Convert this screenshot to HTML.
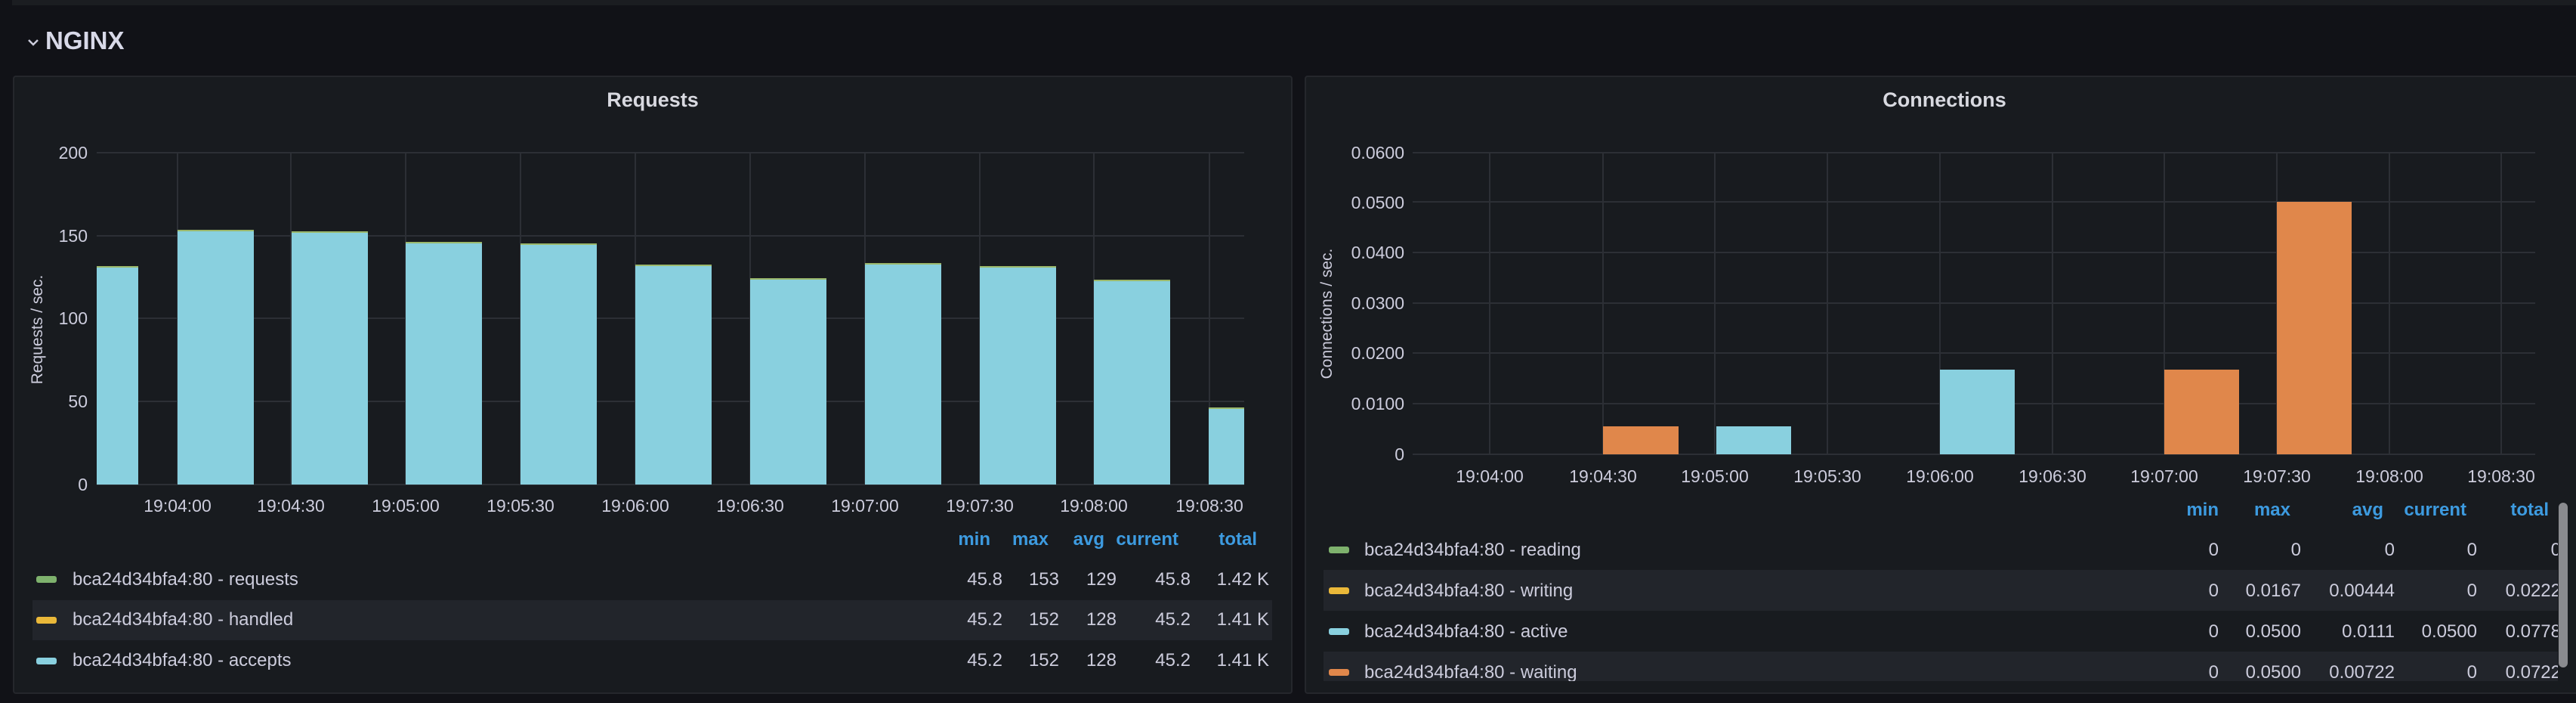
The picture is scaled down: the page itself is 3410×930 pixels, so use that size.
<!DOCTYPE html>
<html><head><meta charset="utf-8"><style>
*{margin:0;padding:0;box-sizing:border-box}
body{width:3410px;height:930px;background:#111217;overflow:hidden;font-family:"Liberation Sans",sans-serif;color:#ccccdc;position:relative}
.a{position:absolute}
.panel{position:absolute;background:#181b1f;border:2px solid #25272c;border-radius:4px;overflow:hidden}
.title{position:absolute;top:18px;width:100%;text-align:center;font-size:27px;font-weight:bold;color:#d8d9e0}
.hdr{position:absolute;font-size:24px;color:#3d9be0;font-weight:bold}
.row{position:absolute;height:53px;font-size:24px}
.hl{background:#22252b}
.mk{position:absolute;width:27px;height:9px;border-radius:3px}
.t{position:absolute;white-space:nowrap}
.r{position:absolute;text-align:right;white-space:nowrap}
svg text{font-family:"Liberation Sans",sans-serif;fill:#ccccdc}
</style></head><body>
<div class="a" style="left:16px;top:0;width:3394px;height:7px;background:#1b1d21"></div>
<svg class="a" style="left:36px;top:49px" width="18" height="14"><path d="M2 4 L8 10 L14 4" stroke="#ccccdc" stroke-width="2.5" fill="none"/></svg>
<div class="t" style="left:60px;top:35px;font-size:33px;font-weight:bold;color:#d8d9e8">NGINX</div>

<!-- Left panel -->
<div class="panel" style="left:17px;top:100px;width:1694px;height:818px"></div>
<div class="t" style="left:17px;top:117px;width:1694px;text-align:center;font-size:27px;font-weight:bold;color:#d8d9e0">Requests</div>
<svg class="a" style="left:0;top:0" width="1720" height="700">
<g stroke="#2c2f35" stroke-width="2">
<line x1="128" y1="202" x2="1647" y2="202"/><line x1="128" y1="312" x2="1647" y2="312"/><line x1="128" y1="421" x2="1647" y2="421"/><line x1="128" y1="531" x2="1647" y2="531"/><line x1="128" y1="641" x2="1647" y2="641"/>
<line x1="235" y1="202" x2="235" y2="641"/><line x1="385" y1="202" x2="385" y2="641"/><line x1="537" y1="202" x2="537" y2="641"/><line x1="689" y1="202" x2="689" y2="641"/><line x1="841" y1="202" x2="841" y2="641"/><line x1="993" y1="202" x2="993" y2="641"/><line x1="1145" y1="202" x2="1145" y2="641"/><line x1="1297" y1="202" x2="1297" y2="641"/><line x1="1448" y1="202" x2="1448" y2="641"/><line x1="1601" y1="202" x2="1601" y2="641"/>
</g>
<g fill="#89d0df">
<rect x="128" y="353" width="55" height="288"/><rect x="235" y="305" width="101" height="336"/><rect x="386" y="307" width="101" height="334"/><rect x="537" y="321" width="101" height="320"/><rect x="689" y="323" width="101" height="318"/><rect x="841" y="351" width="101" height="290"/><rect x="993" y="369" width="101" height="272"/><rect x="1145" y="349" width="101" height="292"/><rect x="1297" y="353" width="101" height="288"/><rect x="1448" y="371" width="101" height="270"/><rect x="1600" y="540" width="47" height="101"/>
</g>
<g fill="#9bb86b">
<rect x="128" y="352" width="55" height="2"/><rect x="235" y="304" width="101" height="2"/><rect x="386" y="306" width="101" height="2"/><rect x="537" y="320" width="101" height="2"/><rect x="689" y="322" width="101" height="2"/><rect x="841" y="350" width="101" height="2"/><rect x="993" y="368" width="101" height="2"/><rect x="1145" y="348" width="101" height="2"/><rect x="1297" y="352" width="101" height="2"/><rect x="1448" y="370" width="101" height="2"/><rect x="1600" y="539" width="47" height="2"/>
</g>
<g font-size="23" text-anchor="end">
<text x="116" y="210">200</text><text x="116" y="320">150</text><text x="116" y="429">100</text><text x="116" y="539">50</text><text x="116" y="649">0</text>
</g>
<g font-size="23" text-anchor="middle">
<text x="235" y="677">19:04:00</text><text x="385" y="677">19:04:30</text><text x="537" y="677">19:05:00</text><text x="689" y="677">19:05:30</text><text x="841" y="677">19:06:00</text><text x="993" y="677">19:06:30</text><text x="1145" y="677">19:07:00</text><text x="1297" y="677">19:07:30</text><text x="1448" y="677">19:08:00</text><text x="1601" y="677">19:08:30</text>
</g>
<text x="0" y="0" font-size="21" text-anchor="middle" transform="translate(56,436) rotate(-90)">Requests / sec.</text>
</svg>
<div class="hdr r" style="left:1211px;top:700px;width:100px">min</div>
<div class="hdr r" style="left:1288px;top:700px;width:100px">max</div>
<div class="hdr r" style="left:1362px;top:700px;width:100px">avg</div>
<div class="hdr r" style="left:1460px;top:700px;width:100px">current</div>
<div class="hdr r" style="left:1564px;top:700px;width:100px">total</div>

<div class="row" style="left:43px;top:740px;width:1641px"><div class="mk" style="left:5px;top:22px;background:#7eb26d"></div><div class="t" style="left:53px;top:13px">bca24d34bfa4:80 - requests</div>
<div class="r" style="left:1184px;top:13px;width:100px">45.8</div><div class="r" style="left:1259px;top:13px;width:100px">153</div><div class="r" style="left:1335px;top:13px;width:100px">129</div><div class="r" style="left:1433px;top:13px;width:100px">45.8</div><div class="r" style="left:1537px;top:13px;width:100px">1.42 K</div></div>
<div class="row hl" style="left:43px;top:794px;width:1641px"><div class="mk" style="left:5px;top:22px;background:#eab839"></div><div class="t" style="left:53px;top:12px">bca24d34bfa4:80 - handled</div>
<div class="r" style="left:1184px;top:12px;width:100px">45.2</div><div class="r" style="left:1259px;top:12px;width:100px">152</div><div class="r" style="left:1335px;top:12px;width:100px">128</div><div class="r" style="left:1433px;top:12px;width:100px">45.2</div><div class="r" style="left:1537px;top:12px;width:100px">1.41 K</div></div>
<div class="row" style="left:43px;top:847px;width:1641px"><div class="mk" style="left:5px;top:23px;background:#89d0df"></div><div class="t" style="left:53px;top:13px">bca24d34bfa4:80 - accepts</div>
<div class="r" style="left:1184px;top:13px;width:100px">45.2</div><div class="r" style="left:1259px;top:13px;width:100px">152</div><div class="r" style="left:1335px;top:13px;width:100px">128</div><div class="r" style="left:1433px;top:13px;width:100px">45.2</div><div class="r" style="left:1537px;top:13px;width:100px">1.41 K</div></div>

<!-- Right panel -->
<div class="panel" style="left:1727px;top:100px;width:1690px;height:818px"></div>
<div class="t" style="left:1727px;top:117px;width:1694px;text-align:center;font-size:27px;font-weight:bold;color:#d8d9e0">Connections</div>
<svg class="a" style="left:1705px;top:0" width="1705" height="700">
<g transform="translate(-1705,0)">
<g stroke="#2c2f35" stroke-width="2">
<line x1="1870" y1="202" x2="3356" y2="202"/><line x1="1870" y1="267" x2="3356" y2="267"/><line x1="1870" y1="334" x2="3356" y2="334"/><line x1="1870" y1="401" x2="3356" y2="401"/><line x1="1870" y1="467" x2="3356" y2="467"/><line x1="1870" y1="534" x2="3356" y2="534"/><line x1="1870" y1="601" x2="3356" y2="601"/>
<line x1="1972" y1="202" x2="1972" y2="601"/><line x1="2122" y1="202" x2="2122" y2="601"/><line x1="2270" y1="202" x2="2270" y2="601"/><line x1="2419" y1="202" x2="2419" y2="601"/><line x1="2568" y1="202" x2="2568" y2="601"/><line x1="2717" y1="202" x2="2717" y2="601"/><line x1="2865" y1="202" x2="2865" y2="601"/><line x1="3014" y1="202" x2="3014" y2="601"/><line x1="3163" y1="202" x2="3163" y2="601"/><line x1="3311" y1="202" x2="3311" y2="601"/>
</g>
<rect x="2122" y="564" width="100" height="37" fill="#e0874b"/>
<rect x="2272" y="564" width="99" height="37" fill="#89d0df"/>
<rect x="2568" y="489" width="99" height="112" fill="#89d0df"/>
<rect x="2865" y="489" width="99" height="112" fill="#e0874b"/>
<rect x="3014" y="267" width="99" height="334" fill="#e0874b"/>
<g font-size="23" text-anchor="end">
<text x="1859" y="210">0.0600</text><text x="1859" y="276">0.0500</text><text x="1859" y="342">0.0400</text><text x="1859" y="409">0.0300</text><text x="1859" y="475">0.0200</text><text x="1859" y="542">0.0100</text><text x="1859" y="609">0</text>
</g>
<g font-size="23" text-anchor="middle">
<text x="1972" y="638">19:04:00</text><text x="2122" y="638">19:04:30</text><text x="2270" y="638">19:05:00</text><text x="2419" y="638">19:05:30</text><text x="2568" y="638">19:06:00</text><text x="2717" y="638">19:06:30</text><text x="2865" y="638">19:07:00</text><text x="3014" y="638">19:07:30</text><text x="3163" y="638">19:08:00</text><text x="3311" y="638">19:08:30</text>
</g>
<text x="0" y="0" font-size="21" text-anchor="middle" transform="translate(1763,415) rotate(-90)">Connections / sec.</text>
</g>
</svg>
<div class="hdr r" style="left:2837px;top:661px;width:100px">min</div>
<div class="hdr r" style="left:2932px;top:661px;width:100px">max</div>
<div class="hdr r" style="left:3055px;top:661px;width:100px">avg</div>
<div class="hdr r" style="left:3165px;top:661px;width:100px">current</div>
<div class="hdr r" style="left:3274px;top:661px;width:100px">total</div>
<div class="a" style="left:1752px;top:700px;width:1634px;height:201px;overflow:hidden">
<div class="row" style="left:0;top:0;width:1642px;height:54px"><div class="mk" style="left:7px;top:23px;background:#7eb26d"></div><div class="t" style="left:54px;top:14px">bca24d34bfa4:80 - reading</div>
<div class="r" style="left:1085px;top:14px;width:100px">0</div><div class="r" style="left:1194px;top:14px;width:100px">0</div><div class="r" style="left:1318px;top:14px;width:100px">0</div><div class="r" style="left:1427px;top:14px;width:100px">0</div><div class="r" style="left:1538px;top:14px;width:100px">0</div></div>
<div class="row hl" style="left:0;top:54px;width:1642px;height:54px"><div class="mk" style="left:7px;top:23px;background:#eab839"></div><div class="t" style="left:54px;top:14px">bca24d34bfa4:80 - writing</div>
<div class="r" style="left:1085px;top:14px;width:100px">0</div><div class="r" style="left:1194px;top:14px;width:100px">0.0167</div><div class="r" style="left:1318px;top:14px;width:100px">0.00444</div><div class="r" style="left:1427px;top:14px;width:100px">0</div><div class="r" style="left:1538px;top:14px;width:100px">0.0222</div></div>
<div class="row" style="left:0;top:108px;width:1642px;height:54px"><div class="mk" style="left:7px;top:23px;background:#89d0df"></div><div class="t" style="left:54px;top:14px">bca24d34bfa4:80 - active</div>
<div class="r" style="left:1085px;top:14px;width:100px">0</div><div class="r" style="left:1194px;top:14px;width:100px">0.0500</div><div class="r" style="left:1318px;top:14px;width:100px">0.0111</div><div class="r" style="left:1427px;top:14px;width:100px">0.0500</div><div class="r" style="left:1538px;top:14px;width:100px">0.0778</div></div>
<div class="row hl" style="left:0;top:162px;width:1642px;height:54px"><div class="mk" style="left:7px;top:23px;background:#e0874b"></div><div class="t" style="left:54px;top:14px">bca24d34bfa4:80 - waiting</div>
<div class="r" style="left:1085px;top:14px;width:100px">0</div><div class="r" style="left:1194px;top:14px;width:100px">0.0500</div><div class="r" style="left:1318px;top:14px;width:100px">0.00722</div><div class="r" style="left:1427px;top:14px;width:100px">0</div><div class="r" style="left:1538px;top:14px;width:100px">0.0722</div></div>
</div>
<div class="a" style="left:3387px;top:665px;width:12px;height:218px;border-radius:6px;background:#8a8b8f"></div>
</body></html>
